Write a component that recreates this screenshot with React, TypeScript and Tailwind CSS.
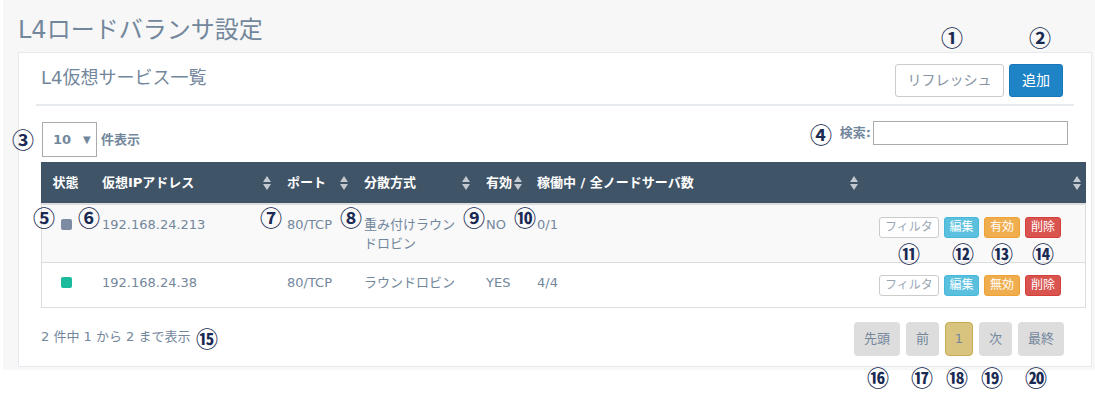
import React from "react";

const MARKS: { n: string; x: number; y: number }[] = [
  { n: "①", x: 952, y: 36 },
  { n: "②", x: 1040, y: 36 },
  { n: "③", x: 23, y: 138 },
  { n: "④", x: 821, y: 133 },
  { n: "⑤", x: 44, y: 216 },
  { n: "⑥", x: 89, y: 216 },
  { n: "⑦", x: 271, y: 216 },
  { n: "⑧", x: 351, y: 216 },
  { n: "⑨", x: 474, y: 216 },
  { n: "⑩", x: 525, y: 216 },
  { n: "⑪", x: 909, y: 252 },
  { n: "⑫", x: 963, y: 252 },
  { n: "⑬", x: 1002, y: 252 },
  { n: "⑭", x: 1043, y: 252 },
  { n: "⑮", x: 207, y: 337 },
  { n: "⑯", x: 878, y: 376 },
  { n: "⑰", x: 922, y: 376 },
  { n: "⑱", x: 957, y: 376 },
  { n: "⑲", x: 992, y: 376 },
  { n: "⑳", x: 1036, y: 376 },
];

function SortIcon() {
  return (
    <svg width="8" height="14" viewBox="0 0 8 14" className="shrink-0">
      <path d="M4 0L8 6H0z" fill="#c3c9d0" />
      <path d="M4 14L0 8h8z" fill="#c3c9d0" />
    </svg>
  );
}

function RowButtons({ toggle }: { toggle: string }) {
  return (
    <div className="mt-[2px] flex gap-[5px] text-[12px] leading-[19px]">
      <span className="h-[21px] w-[60px] rounded-[3px] border border-[#cccccc] bg-white text-center text-[#9aa6b4]">
        フィルタ
      </span>
      <span className="h-[21px] w-[35px] rounded-[3px] border border-[#46b8da] bg-[#5bc0de] text-center text-white">
        編集
      </span>
      <span className="h-[21px] w-[36px] rounded-[3px] border border-[#eea236] bg-[#f0ad4e] text-center text-white">
        {toggle}
      </span>
      <span className="h-[21px] w-[36px] rounded-[3px] border border-[#d43f3a] bg-[#d9534f] text-center text-white">
        削除
      </span>
    </div>
  );
}

const headCols = "grid grid-cols-[49px_185px_77px_122px_51px_337px_224px]";
const bodyCols = "grid grid-cols-[48px_185px_77px_122px_51px_337px_223px]";

export default function App() {
  const rows = [
    {
      color: "bg-[#7d8ca2]",
      ip: "192.168.24.213",
      port: "80/TCP",
      method: "重み付けラウンドロビン",
      enabled: "NO",
      nodes: "0/1",
      toggle: "有効",
    },
    {
      color: "bg-[#1abb9c]",
      ip: "192.168.24.38",
      port: "80/TCP",
      method: "ラウンドロビン",
      enabled: "YES",
      nodes: "4/4",
      toggle: "無効",
    },
  ];

  return (
    <div className="relative h-[401px] w-[1095px] overflow-hidden bg-white font-['DejaVu_Sans','Noto_Sans_CJK_JP',sans-serif] text-[13px] text-[#73879c]">
      <div className="ml-[3px] h-[370px] bg-[#f7f7f7] pl-[15px] pt-[17px]">
        <h3 className="h-[26px] text-[24px] leading-[26px]">L4ロードバランサ設定</h3>

        <div className="mt-[9px] h-[315px] w-[1074px] border border-[#e6e9ed] bg-white px-[17px] pt-[10px]">
          {/* パネルタイトル */}
          <div className="flex h-[43px] items-start justify-between border-b-2 border-[#e6e9ed] pl-[5px] pr-[11px]">
            <h2 className="mt-[4px] text-[18px] leading-[22px]">L4仮想サービス一覧</h2>
            <div className="mt-[1px] flex gap-[5px] text-[14px]">
              <button className="h-[33px] w-[109px] rounded-[3px] border border-[#cccccc] bg-white text-[#8593a3]">
                リフレッシュ
              </button>
              <button className="h-[33px] w-[54px] rounded-[3px] border border-[#1b78b8] bg-[#1f84c6] text-white">
                追加
              </button>
            </div>
          </div>

          {/* 件数・検索 */}
          <div className="mt-[16px] flex items-start justify-between px-[6px]">
            <div className="flex items-center font-bold">
              <div className="flex h-[35px] w-[55px] items-center border border-[#aaaaaa] pl-[10px]">
                <span>10</span>
                <span className="ml-[12px] text-[10px]">▼</span>
              </div>
              <span className="ml-[4px]">件表示</span>
            </div>
            <div className="-mt-[1px] flex items-center">
              <span className="font-bold">検索:</span>
              <input className="ml-[2px] h-[24px] w-[195px] border border-[#aaaaaa] bg-white outline-none" />
            </div>
          </div>

          {/* テーブル */}
          <div className="ml-[5px] mt-[5px] w-[1045px]">
            <div className={`${headCols} h-[43px] border-b-2 border-[#dddddd] bg-[#405467] font-bold text-white`}>
              <div className="flex items-center justify-center">状態</div>
              <div className="flex items-center justify-between pl-[12px] pr-[4px]">
                仮想IPアドレス <SortIcon />
              </div>
              <div className="flex items-center justify-between pl-[12px] pr-[4px]">
                ポート <SortIcon />
              </div>
              <div className="flex items-center justify-between pl-[12px] pr-[4px]">
                分散方式 <SortIcon />
              </div>
              <div className="flex items-center justify-between pl-[12px] pr-[3px]">
                有効 <SortIcon />
              </div>
              <div className="flex items-center justify-between pl-[12px] pr-[4px]">
                稼働中 / 全ノードサーバ数 <SortIcon />
              </div>
              <div className="flex items-center justify-end pr-[5px]">
                <SortIcon />
              </div>
            </div>

            <div className="border-x border-b border-[#dddddd]">
              {rows.map((r, i) => (
                <div
                  key={r.ip}
                  className={`${bodyCols} leading-[19px] ${
                    i === 0 ? "h-[58px] border-b border-[#dddddd] bg-[#f9f9f9]" : "h-[44px] bg-white"
                  }`}
                >
                  <div className="flex justify-center pt-[14px]">
                    <span className={`h-[11px] w-[11px] rounded-[2px] ${r.color}`} />
                  </div>
                  <div className="pl-[12px] pt-[10px]">{r.ip}</div>
                  <div className="pl-[12px] pt-[10px]">{r.port}</div>
                  <div className="pl-[12px] pr-[12px] pt-[10px]">{r.method}</div>
                  <div className="pl-[12px] pt-[10px]">{r.enabled}</div>
                  <div className="pl-[12px] pt-[10px]">{r.nodes}</div>
                  <div className="pl-[17px] pt-[10px]">
                    <RowButtons toggle={r.toggle} />
                  </div>
                </div>
              ))}
            </div>
          </div>

          {/* フッター */}
          <div className="mt-[14px] flex items-start justify-between pl-[5px] pr-[10px]">
            <p className="mt-[5px] leading-[19px]">2 件中 1 から 2 まで表示</p>
            <div className="flex gap-[6px]">
              <span className="flex h-[34px] w-[46px] items-center justify-center rounded-[4px] bg-[#dddddd]">先頭</span>
              <span className="flex h-[34px] w-[33px] items-center justify-center rounded-[4px] bg-[#dddddd]">前</span>
              <span className="flex h-[34px] w-[28px] items-center justify-center rounded-[4px] border border-[#c9ac52] bg-[#d8c47f]">
                1
              </span>
              <span className="flex h-[34px] w-[33px] items-center justify-center rounded-[4px] bg-[#dddddd]">次</span>
              <span className="flex h-[34px] w-[46px] items-center justify-center rounded-[4px] bg-[#dddddd]">最終</span>
            </div>
          </div>
        </div>
      </div>

      {/* 注記番号 */}
      {MARKS.map((m) => (
        <span
          key={m.n}
          className="absolute -translate-x-1/2 -translate-y-1/2 font-['Noto_Sans_CJK_JP',sans-serif] text-[22px] font-semibold leading-none text-[#1a2a52]"
          style={{ left: m.x, top: m.y }}
        >
          {m.n}
        </span>
      ))}
    </div>
  );
}
